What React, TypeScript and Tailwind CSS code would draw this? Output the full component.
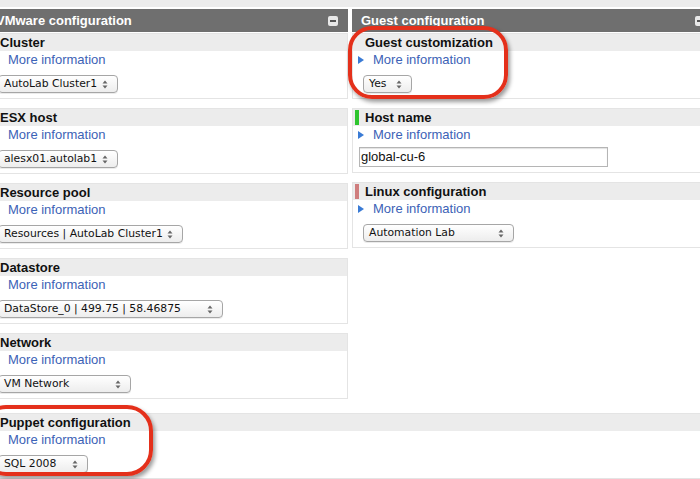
import React from 'react';

const SANS = "font-['Liberation_Sans',Arial,sans-serif]";
const UI = "font-['DejaVu_Sans',sans-serif]";

const Updown: React.FC = () => (
  <svg width="6" height="9" viewBox="0 0 6 9" className="shrink-0">
    <path d="M0.5 3.5 L3 0.5 L5.5 3.5 Z" fill="#666" />
    <path d="M0.5 5.5 L3 8.5 L5.5 5.5 Z" fill="#666" />
  </svg>
);

const Select: React.FC<{ value: string; width: number }> = ({ value, width }) => (
  <div
    className={`flex items-center justify-between h-[18px] pl-[5px] pr-[9px] rounded-[4px] border border-[#a6a6a6] bg-gradient-to-b from-white to-[#ededed] shadow-[0_1px_0_rgba(0,0,0,0.08)] text-[10.8px] text-[#111] ${UI}`}
    style={{ width }}
  >
    <span className="whitespace-nowrap leading-none">{value}</span>
    <Updown />
  </div>
);

const MoreInfo: React.FC = () => (
  <div className="flex items-center h-[18px] pl-[5px]">
    <svg width="6" height="8" viewBox="0 0 6 8" className="shrink-0">
      <path d="M0 0 L6 4 L0 8 Z" fill="#3a7bd5" />
    </svg>
    <span className={`ml-[9px] text-[13px] text-[#3c62b6] ${SANS}`}>More information</span>
  </div>
);

const Section: React.FC<{ title: string; bar?: string; children: React.ReactNode }> = ({ title, bar, children }) => (
  <div className="border border-[#e4e4e4] bg-white">
    <div className="flex items-center h-[17px] bg-[#ececec]">
      <div className="w-[9px] h-full flex items-center pl-[2px]">
        {bar && <div className="w-[4px] h-[15px]" style={{ backgroundColor: bar }} />}
      </div>
      <span className={`ml-[3px] text-[13px] font-bold text-[#111] leading-none ${SANS}`}>{title}</span>
    </div>
    <div className="pb-[5px]">
      <MoreInfo />
      {children}
    </div>
  </div>
);

const Header: React.FC<{ title: string }> = ({ title }) => (
  <div className="flex items-center justify-between h-[23px] bg-[#6f6f6f] pl-[9px] pr-[10px]">
    <span className={`text-[13px] font-bold text-white ${SANS}`}>{title}</span>
    <div className="w-[10px] h-[10px] rounded-[2px] bg-[#e8e8e8] flex items-center justify-center">
      <div className="w-[6px] h-[2px] bg-[#555]" />
    </div>
  </div>
);

const Field: React.FC<{ children: React.ReactNode }> = ({ children }) => (
  <div className="mt-[6px] pl-[10px]">{children}</div>
);

const left = [
  { title: 'Cluster', value: 'AutoLab Cluster1', w: 120 },
  { title: 'ESX host', value: 'alesx01.autolab1', w: 120 },
  { title: 'Resource pool', value: 'Resources | AutoLab Cluster1', w: 185 },
  { title: 'Datastore', value: 'DataStore_0 | 499.75 | 58.46875', w: 225 },
  { title: 'Network', value: 'VM Network', w: 133 },
];

export default function App() {
  return (
    <div className="relative w-[700px] h-[479px] overflow-hidden bg-white">
      <div className="h-[7px] bg-[#ececec]" />
      <div className="w-[728px] -ml-[13px] mt-[2px]">
        <div className="flex gap-[4px]">
          <div className="w-[361px]">
            <Header title="VMware configuration" />
            <div className="flex flex-col gap-[9px] mt-px">
              {left.map((s) => (
                <Section key={s.title} title={s.title}>
                  <Field>
                    <Select value={s.value} width={s.w} />
                  </Field>
                </Section>
              ))}
            </div>
          </div>
          <div className="w-[363px]">
            <Header title="Guest configuration" />
            <div className="flex flex-col gap-[9px] mt-px">
              <Section title="Guest customization">
                <Field>
                  <Select value="Yes" width={49} />
                </Field>
              </Section>
              <Section title="Host name" bar="#2ec52e">
                <div className="mt-[3px] pl-[6px]">
                  <div className={`w-[249px] h-[20px] border border-[#b5b5b5] shadow-[inset_0_1px_1px_rgba(0,0,0,0.12)] flex items-center pl-[1px] text-[13px] text-[#111] ${SANS}`}>
                    global-cu-6
                  </div>
                </div>
              </Section>
              <Section title="Linux configuration" bar="#cf7d7d">
                <Field>
                  <Select value="Automation Lab" width={151} />
                </Field>
              </Section>
            </div>
          </div>
        </div>
        <div className="mt-[14px]">
          <Section title="Puppet configuration">
            <Field>
              <Select value="SQL 2008" width={90} />
            </Field>
          </Section>
          <div className="h-[4px] bg-[#ececec]" />
        </div>
      </div>

      <div className="absolute left-[348px] top-[26px] w-[160px] h-[73px] rounded-[24px] border-[4px] border-[#e4301b] shadow-[2px_3px_4px_rgba(0,0,0,0.4)]" />
      <div className="absolute left-[-20px] top-[405px] w-[173px] h-[71px] rounded-[26px] border-[4px] border-[#e4301b] shadow-[2px_3px_4px_rgba(0,0,0,0.4)]" />
    </div>
  );
}
